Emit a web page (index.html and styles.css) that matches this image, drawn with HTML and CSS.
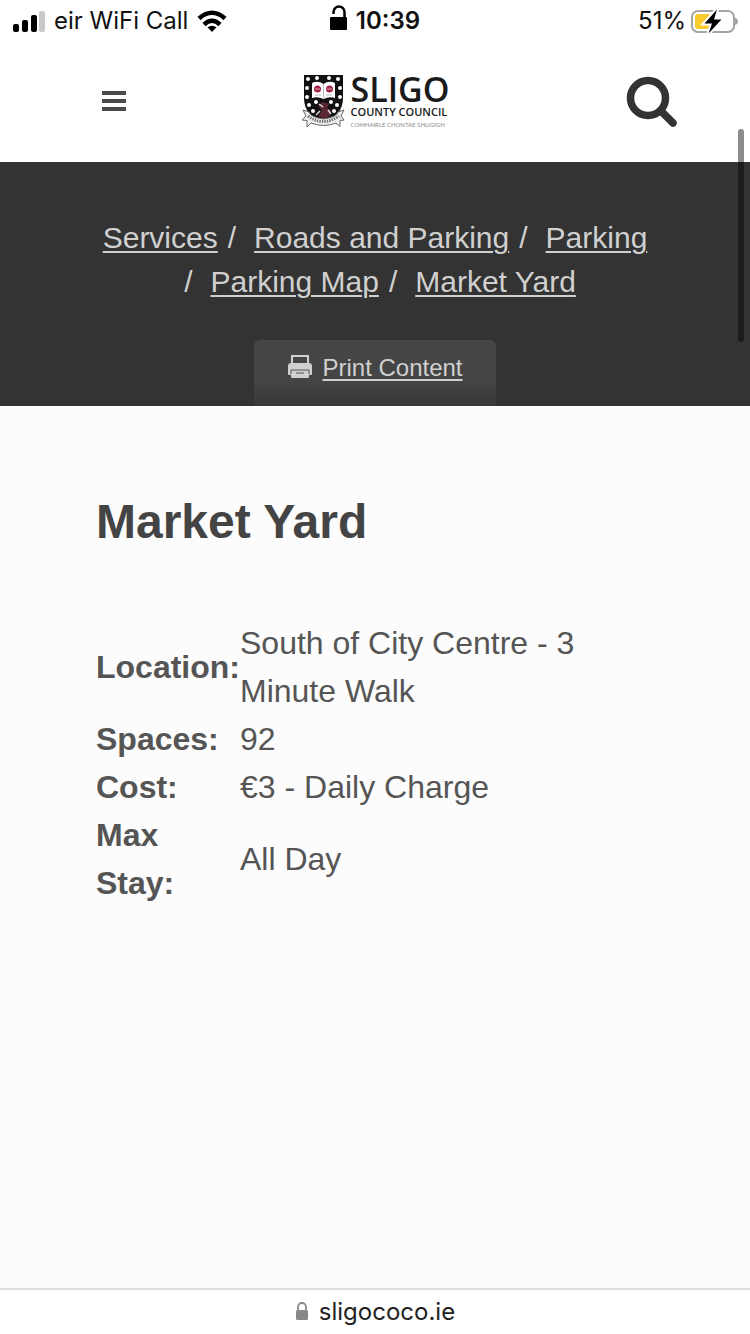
FILE: index.html
```html
<!DOCTYPE html>
<html lang="en">
<head>
<meta charset="utf-8">
<meta name="viewport" content="width=device-width, initial-scale=1">
<title>Market Yard - Sligo County Council</title>
<link rel="stylesheet" href="styles.css">
</head>
<body>
<div class="status">
  <div class="status-left">
    <svg width="33" height="24" viewBox="0 0 33 24" aria-hidden="true">
      <rect x="1" y="15" width="6" height="8" rx="2"/><rect x="10" y="11" width="6" height="12" rx="2"/><rect x="19" y="6" width="6" height="17" rx="2"/><rect x="27" y="2" width="6" height="21" rx="2" fill="#c9c9c9"/>
    </svg>
    <span>eir WiFi Call</span>
    <svg width="30" height="22" viewBox="0 0 30 22" fill="none" stroke="#000" stroke-width="4.500" aria-hidden="true">
      <path d="M2 8.500Q15-3 28 8.500"/><path d="M7 14.500Q15 7 23 14.500"/><path d="M15 22l-4.500-4.700q4.500-3.200 9 0z" fill="#000" stroke="none"/>
    </svg>
  </div>
  <div class="status-time">
    <svg width="17" height="26" viewBox="0 0 17 26" aria-hidden="true"><rect x="0" y="12" width="17" height="13" rx="1"/><path d="M3.500 9V7a5.500 5.500 0 0 1 11 0v6" fill="none" stroke="#000" stroke-width="2.500"/></svg>
    <span>10:39</span>
  </div>
  <div class="status-right">
    <span>51%</span>
    <svg width="50" height="28" viewBox="0 0 50 28" aria-hidden="true">
      <rect x="4" y="4" width="42" height="21" rx="6" fill="#fff" stroke="#a5a5a5" stroke-width="2"/>
      <path d="M10 7h12v15H10a3 3 0 0 1-3-3v-9a3 3 0 0 1 3-3z" fill="#f7ca2e"/>
      <path d="M47 11q3 .5 3 3.500t-3 3.500z" fill="#a5a5a5"/>
      <path d="M29 2.500L16.500 16.500h7.500L20.500 26.500 33.500 12.500H26z" stroke="#fff" stroke-width="4"/>
      <path d="M29 2.500L16.500 16.500h7.500L20.500 26.500 33.500 12.500H26z"/>
    </svg>
  </div>
</div>

<header class="site-header">
  <button class="icon-button menu" type="button" aria-label="Menu">
    <svg width="26" height="22" viewBox="0 0 26 22"><path d="M1 2h24M1 10h24M1 18h24" stroke="#4a4a4a" stroke-width="4"/></svg>
  </button>
  <a class="logo" href="#">
    <svg width="44" height="56" viewBox="0 0 44 56" aria-hidden="true">
      <path d="M3 1h39v23q0 17-19.500 26Q3 41 3 24z" fill="#111"/>
      <g fill="#fff"><circle cx="7" cy="5" r="2"/><circle cx="16" cy="4" r="2"/><circle cx="28" cy="4" r="2"/><circle cx="37" cy="5" r="2"/><circle cx="6" cy="14" r="2"/><circle cx="39" cy="14" r="2"/><circle cx="6" cy="23" r="2"/><circle cx="39" cy="23" r="2"/><circle cx="8" cy="31" r="2"/><circle cx="36" cy="31" r="2"/><circle cx="15" cy="28" r="2"/><circle cx="30" cy="28" r="2"/><circle cx="12" cy="37" r="2"/><circle cx="33" cy="37" r="2"/>
      <path d="M11 9q6-3 11.500 1Q28 6 34 9v15q-6-2-11.500 1Q17 22 11 24z"/></g>
      <circle cx="16.500" cy="15" r="3.500" fill="#a12545"/><circle cx="28.500" cy="15" r="3.500" fill="#a12545"/><path d="M14 15h5M26 15h5" stroke="#e0a7b6"/>
      <path d="M22.500 10v14M14 21h6M25 21h6" stroke="#bbb"/>
      <path d="M17 31l5-3 6 2-2 4 4 2-1 6-6 3-6-3 4-5z" fill="#5c2735"/>
      <path d="M18 30l4 3M27 36l3 4M15 41l4-4" stroke="#ddd" stroke-width="1.500"/>
      <path d="M2 36l6 2q1 5 14.500 7Q36 43 37 38l6-2-3 6 3 4-4 .5v6L35 49q-12 5-25 0l-4 4v-6.500L1 46l4-4z" fill="#eee" stroke="#666"/>
      <path d="M7 42q15 11 31 0" fill="none" stroke="#777" stroke-width="3" stroke-dasharray="1.500 1"/>
    </svg>
    <span class="logo-words">
      <span class="logo-name">SLIGO</span>
      <span class="logo-council">COUNTY COUNCIL</span>
      <span class="logo-irish">COMHAIRLE CHONTAE SHLIGIGH</span>
    </span>
  </a>
  <button class="icon-button search" type="button" aria-label="Search">
    <svg width="52" height="52" viewBox="0 0 52 52"><circle cx="22" cy="22" r="17.500" fill="none" stroke="#333" stroke-width="7.500"/><path d="M35 35l12 12" stroke="#333" stroke-width="7.500" stroke-linecap="round"/></svg>
  </button>
</header>

<div class="banner">
  <nav aria-label="Breadcrumb">
    <ol class="crumbs">
      <li><a href="#">Services</a></li>
      <li><a href="#">Roads and Parking</a></li>
      <li><a href="#">Parking</a></li>
      <li><a href="#">Parking Map</a></li>
      <li><a href="#">Market Yard</a></li>
    </ol>
  </nav>
  <a class="print" href="#">
    <svg width="26" height="26" viewBox="0 0 26 26" aria-hidden="true"><path d="M5 10V2h16v8" fill="none" stroke="#d0d0d0" stroke-width="2"/><path d="M4 9h18q3 0 3 3v8q0 1-1 1h-2v2q0 1-1 1H5q-1 0-1-1v-2H2q-1 0-1-1v-8q0-3 3-3z" fill="#d0d0d0"/><path d="M4 20v-4h18v4M9 19h8" fill="none" stroke="#555" stroke-width="1"/></svg>
    <span>Print Content</span>
  </a>
</div>

<main class="content">
  <h1>Market Yard</h1>
  <table class="details">
    <tbody>
      <tr><th scope="row">Location:</th><td>South of City Centre - 3 Minute Walk</td></tr>
      <tr><th scope="row">Spaces:</th><td>92</td></tr>
      <tr><th scope="row">Cost:</th><td>€3 - Daily Charge</td></tr>
      <tr><th scope="row">Max Stay:</th><td>All Day</td></tr>
    </tbody>
  </table>
</main>

<footer class="address">
  <svg width="14" height="20" viewBox="0 0 14 20" aria-hidden="true"><rect x="1" y="8" width="12" height="10" rx="1.500" fill="#888"/><path d="M3 9V5a4 4 0 0 1 8 0v4" fill="none" stroke="#888" stroke-width="1.800"/></svg>
  <span>sligococo.ie</span>
</footer>
<div class="scroll-thumb"></div>
</body>
</html>
```
FILE: styles.css
```css
* { box-sizing: border-box; }

body {
  position: relative;
  display: flex;
  flex-direction: column;
  min-height: 100vh;
  margin: 0;
  background: #fcfcfc;
  color: #555;
  font-family: "Liberation Sans", Arial, sans-serif;
}

svg { display: block; flex: none; }

.status {
  display: grid;
  grid-template-columns: 1fr auto 1fr;
  align-items: center;
  height: 42px;
  padding: 0 12px;
  background: #fff;
  color: #111;
  font: 24px/40px Inter, sans-serif;
}

.status-left,
.status-time,
.status-right { display: flex; align-items: center; gap: 9px; }
.status-right { justify-content: flex-end; gap: 2px; }
.status-time { font-weight: 600; }
.status-time svg { margin-bottom: 6px; }

.site-header {
  display: grid;
  grid-template-columns: 1fr auto 1fr;
  align-items: center;
  height: 120px;
  padding: 0 72px;
  background: #fff;
}

.icon-button { padding: 0; border: 0; background: none; }
.menu { justify-self: start; margin-left: 29px; }
.search { justify-self: end; }

.logo {
  display: flex;
  align-items: center;
  gap: 6px;
  color: #1a1a1a;
  text-decoration: none;
  font-family: "Open Sans", sans-serif;
}

.logo-words { display: grid; white-space: nowrap; }
.logo-name { font-size: 34px; line-height: 32px; font-weight: 600; }
.logo-council { font-size: 11px; line-height: 14px; font-weight: 600; }
.logo-irish { font-family: Lato, sans-serif; font-size: 6px; line-height: 12px; color: #888; }

.banner {
  display: flex;
  flex-direction: column;
  align-items: center;
  gap: 36px;
  padding: 54px 96px 0;
  background: #333;
  color: #d0d0d0;
}

.banner a { color: #d0d0d0; }

.crumbs {
  display: flex;
  flex-wrap: wrap;
  justify-content: center;
  margin: 0;
  padding: 0;
  list-style: none;
  font-size: 30px;
  line-height: 44px;
}

.crumbs a { text-underline-offset: 3px; text-decoration-thickness: 2px; }
.crumbs li + li::before { content: "/"; padding: 0 18px 0 10px; }

.print {
  display: flex;
  justify-content: center;
  gap: 9px;
  min-width: 242px;
  height: 66px;
  padding: 14px 32px;
  border-radius: 6px 6px 0 0;
  background: linear-gradient(#454545 60%, #383838);
  font-size: 24px;
  line-height: 28px;
  text-underline-offset: 3px;
}

.content { flex: 1; padding: 88px 96px 48px; }

h1 {
  margin: 0 0 69px;
  color: #444;
  font-size: 48px;
  line-height: 56px;
}

.details {
  width: 100%;
  border-collapse: collapse;
  font-size: 32px;
  line-height: 48px;
}

.details th,
.details td { padding: 0; text-align: left; vertical-align: middle; }
.details th { width: 1%; }

.address {
  display: flex;
  align-items: center;
  justify-content: center;
  gap: 10px;
  height: 46px;
  border-top: 2px solid #ddd;
  background: #fff;
  color: #222;
  font: 24px/40px Inter, sans-serif;
}

.scroll-thumb {
  position: absolute;
  top: 129px;
  right: 6px;
  width: 6px;
  height: 213px;
  border-radius: 3px;
  background: rgba(0, 0, 0, 0.45);
}
```
